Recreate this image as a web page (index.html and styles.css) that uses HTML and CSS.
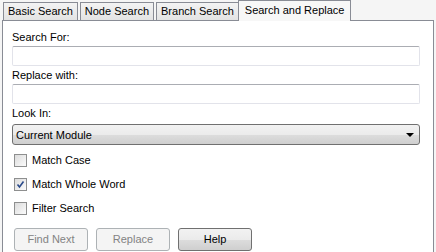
FILE: index.html
```html
<!DOCTYPE html>
<html lang="en">
<head>
    <meta charset="UTF-8">
    <title>Search and Replace</title>
    <link rel="stylesheet" href="styles.css">
</head>
<body>

<div class="tabs">
    <div class="tab">Basic Search</div>
    <div class="tab">Node Search</div>
    <div class="tab">Branch Search</div>
    <div class="tab tab_active">Search and Replace</div>
</div>

<div class="panel">
    <label class="lbl" for="search_for">Search For:</label>
    <input class="txt" type="text" id="search_for">

    <label class="lbl" for="replace_with">Replace with:</label>
    <input class="txt" type="text" id="replace_with">

    <label class="lbl">Look In:</label>
    <div class="combo">
        <span>Current Module</span>
        <span class="arrow"></span>
    </div>

    <div class="checks">
        <div class="chk_row">
            <span class="chk"></span> Match Case
        </div>
        <div class="chk_row">
            <span class="chk">
                <svg width="9" height="9" viewBox="0 0 9 9"><path d="M1.5 4.5 L3.5 7 L7.5 1.5" fill="none" stroke="#2a4a8a" stroke-width="1.6"/></svg>
            </span> Match Whole Word
        </div>
        <div class="chk_row">
            <span class="chk"></span> Filter Search
        </div>
    </div>

    <div class="btns">
        <div class="btn disabled">Find Next</div>
        <div class="btn disabled">Replace</div>
        <div class="btn">Help</div>
    </div>
</div>

</body>
</html>
```

FILE: styles.css
```css
*{
    margin: 0px;
    padding: 0px;
    box-sizing: border-box;
}
body{
    background-color: #f5f5f5;
    font-family: "Liberation Sans", Arial, sans-serif;
    font-size: 11px;
    color: #000;
    width: 436px;
    height: 252px;
    overflow: hidden;
}

.tabs{
    display: flex;
    align-items: flex-end;
    height: 20px;
    padding-left: 3px;
}
.tab{
    height: 18px;
    padding: 0 4px;
    margin-right: 2px;
    border: 1px solid #898c95;
    border-bottom: none;
    background: linear-gradient(#f3f3f3, #e3e3e3);
    line-height: 17px;
}
.tab_active{
    height: 21px;
    margin-left: -3px;
    padding: 0 6px;
    background: #f7f7f7;
    line-height: 18px;
    position: relative;
    top: 1px;
}

.panel{
    margin: 0 2px;
    height: 232px;
    border: 1px solid #898c95;
    border-bottom: none;
    background-color: white;
    padding: 8px 14px 0 9px;
    display: flex;
    flex-direction: column;
}

.lbl{
    display: block;
    height: 16px;
    line-height: 16px;
}

.txt{
    width: 408px;
    height: 20px;
    margin: 1px 0 1px 0;
    border: 1px solid #e2e3ea;
    border-top-color: #abadb3;
    border-radius: 2px;
    background: white;
}

.combo{
    width: 408px;
    height: 21px;
    margin-top: 3px;
    border: 1px solid #707070;
    border-radius: 3px;
    background: linear-gradient(#f2f2f2 0%, #ebebeb 50%, #dddddd 50%, #cfcfcf 100%);
    display: flex;
    align-items: center;
    justify-content: space-between;
    padding: 0 5px 0 3px;
}
.arrow{
    width: 0;
    height: 0;
    border-left: 4px solid transparent;
    border-right: 4px solid transparent;
    border-top: 4px solid #000;
}

.checks{
    margin-top: 3px;
}
.chk_row{
    display: flex;
    align-items: center;
    gap: 5px;
    height: 24px;
    padding-left: 2px;
}
.chk{
    width: 13px;
    height: 13px;
    border: 1px solid #8e8f8f;
    background: linear-gradient(135deg, #dcdcdc, #fbfbfb);
    display: flex;
    align-items: center;
    justify-content: center;
}

.btns{
    display: flex;
    gap: 8px;
    margin-top: 8px;
    padding-left: 2px;
}
.btn{
    width: 74px;
    height: 23px;
    border: 1px solid #707070;
    border-radius: 3px;
    background: linear-gradient(#f2f2f2 0%, #ebebeb 50%, #dddddd 50%, #cfcfcf 100%);
    text-align: center;
    line-height: 21px;
}
.disabled{
    border-color: #adb2b5;
    background: #f4f4f4;
    color: #838383;
}
```
